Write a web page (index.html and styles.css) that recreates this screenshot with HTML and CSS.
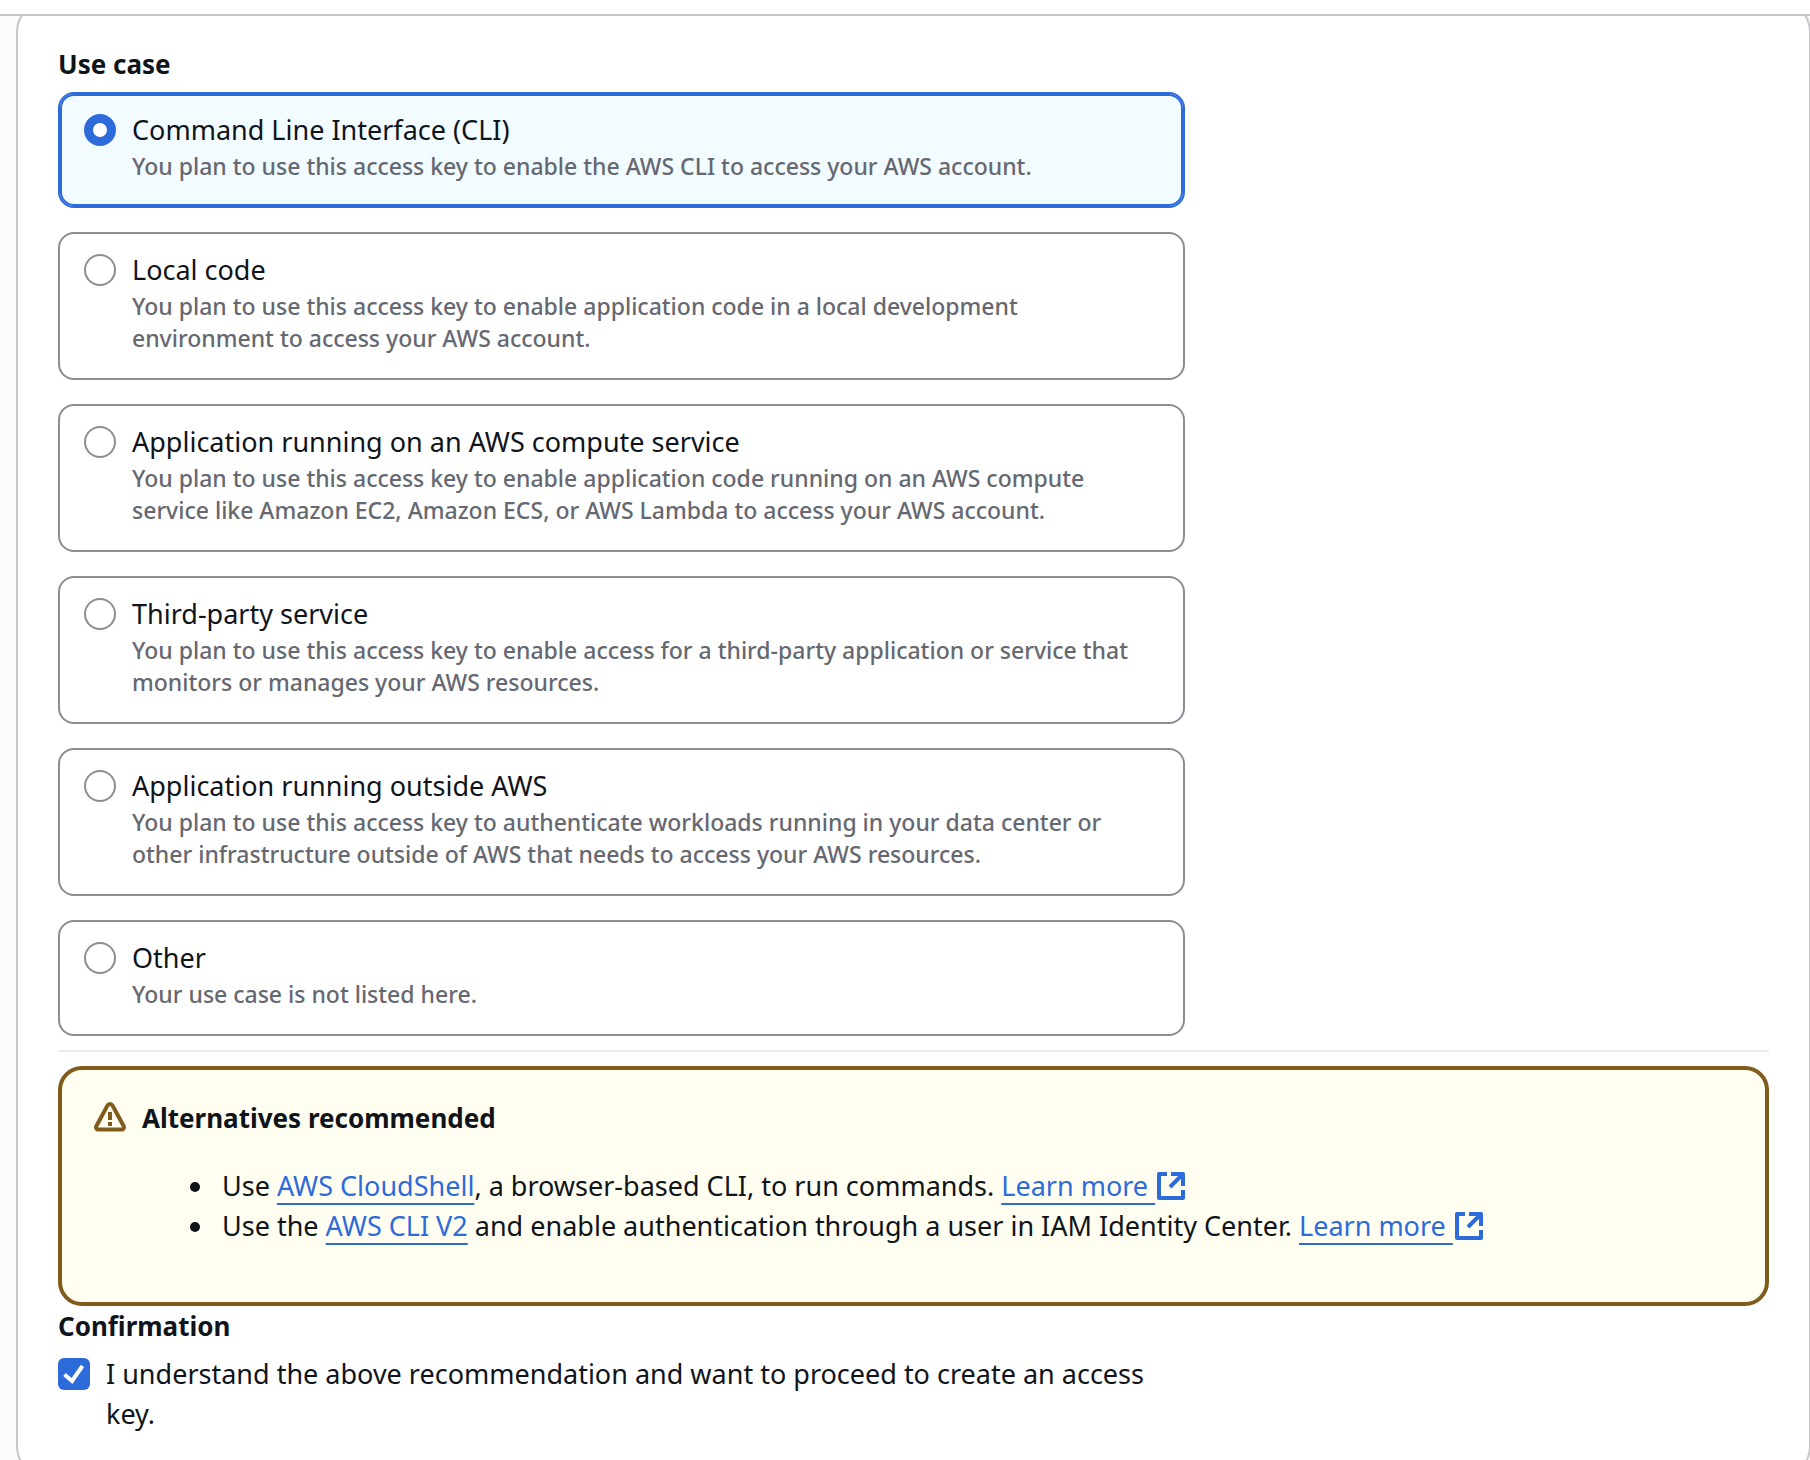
FILE: index.html
```html
<!DOCTYPE html>
<html lang="en">
<head>
<meta charset="utf-8">
<meta name="viewport" content="width=device-width, initial-scale=1">
<title>Create access key</title>
<link rel="stylesheet" href="styles.css">
</head>
<body>
<div class="topbar"></div>
<main class="scroller">
  <form class="container">
    <fieldset class="group">
      <legend class="heading">Use case</legend>
      <div class="columns">
        <div class="tiles">
          <label class="tile">
            <input class="radio" type="radio" name="usecase" checked>
            <span class="tile-text">
              <span class="tile-title">Command Line Interface (CLI)</span>
              <span class="tile-desc">You plan to use this access key to enable the AWS CLI to access your AWS account.</span>
            </span>
          </label>
          <label class="tile">
            <input class="radio" type="radio" name="usecase">
            <span class="tile-text">
              <span class="tile-title">Local code</span>
              <span class="tile-desc">You plan to use this access key to enable application code in a local development environment to access your AWS account.</span>
            </span>
          </label>
          <label class="tile">
            <input class="radio" type="radio" name="usecase">
            <span class="tile-text">
              <span class="tile-title">Application running on an AWS compute service</span>
              <span class="tile-desc">You plan to use this access key to enable application code running on an AWS compute service like Amazon EC2, Amazon ECS, or AWS Lambda to access your AWS account.</span>
            </span>
          </label>
          <label class="tile">
            <input class="radio" type="radio" name="usecase">
            <span class="tile-text">
              <span class="tile-title">Third-party service</span>
              <span class="tile-desc">You plan to use this access key to enable access for a third-party application or service that monitors or manages your AWS resources.</span>
            </span>
          </label>
          <label class="tile">
            <input class="radio" type="radio" name="usecase">
            <span class="tile-text">
              <span class="tile-title">Application running outside AWS</span>
              <span class="tile-desc">You plan to use this access key to authenticate workloads running in your data center or other infrastructure outside of AWS that needs to access your AWS resources.</span>
            </span>
          </label>
          <label class="tile">
            <input class="radio" type="radio" name="usecase">
            <span class="tile-text">
              <span class="tile-title">Other</span>
              <span class="tile-desc">Your use case is not listed here.</span>
            </span>
          </label>
        </div>
      </div>
    </fieldset>

    <hr class="divider">

    <section class="alert">
      <svg class="icon alert-icon" viewBox="0 0 32 32" aria-hidden="true">
        <path d="M13.4 3.6 2.4 24c-.9 1.7.2 3.6 2 3.6h23.2c1.8 0 2.9-1.9 2-3.6l-11-20.4c-1.1-2-4.1-2-5.2 0z"/>
        <path d="M16 10v8M16 20v4"/>
      </svg>
      <div class="alert-body">
        <h2 class="heading">Alternatives recommended</h2>
        <ul class="alert-list">
          <li>Use <a class="link" href="#">AWS CloudShell</a>, a browser-based CLI, to run commands. <a class="link-external" href="#"><span class="link">Learn more&nbsp;</span><svg class="icon" viewBox="0 0 32 32" aria-hidden="true"><path d="M12 4H4v24h24v-8M16 4h12v12M27 5 15 17"/></svg></a></li>
          <li>Use the <a class="link" href="#">AWS CLI V2</a> and enable authentication through a user in IAM Identity Center. <a class="link-external" href="#"><span class="link">Learn more&nbsp;</span><svg class="icon" viewBox="0 0 32 32" aria-hidden="true"><path d="M12 4H4v24h24v-8M16 4h12v12M27 5 15 17"/></svg></a></li>
        </ul>
      </div>
    </section>

    <fieldset class="group">
      <legend class="heading">Confirmation</legend>
      <div class="columns">
        <label class="confirm">
          <span class="check">
            <input class="checkbox" type="checkbox" checked>
            <svg class="check-mark" viewBox="0 0 32 32" aria-hidden="true"><path d="M6.500 16.500 14 23 24.500 8"/></svg>
          </span>
          <span>I understand the above recommendation and want to proceed to create an access key.</span>
        </label>
      </div>
    </fieldset>
  </form>
</main>
</body>
</html>
```
FILE: styles.css
```css
:root {
  --text: #0f141a;
  --muted: #656871;
  --blue: #2d6bdb;
  --border: #c6c6cd;
  --control: #8c8c94;
  --warning: #805c1c;
}

*, *::before, *::after { box-sizing: border-box; }

body {
  margin: 0;
  background: #fcfcfd;
  color: var(--text);
  font-family: "Noto Sans", "Open Sans", sans-serif;
  font-size: 27px;
  line-height: 40px;
}

.topbar {
  position: fixed;
  top: 0;
  left: 0;
  right: 0;
  z-index: 1;
  height: 16px;
  background: #fff;
  border-bottom: 2px solid var(--border);
}

.scroller {
  height: 100vh;
  overflow: hidden auto;
  scrollbar-width: none;
}

.container {
  margin: 0 -1px 0 16px;
  padding: 42px 40px;
  background: #fff;
  border: 2px solid var(--border);
  border-radius: 32px;
}

.group {
  min-width: 0;
  margin: 0;
  padding: 0;
  border: 0;
}

.heading {
  margin: 0;
  padding: 0;
  font-size: 26px;
  font-weight: 700;
  line-height: 40px;
}

.columns {
  display: grid;
  grid-template-columns: repeat(3, minmax(0, 1fr));
  column-gap: 40px;
  padding-top: 8px;
}

.tiles {
  grid-column: span 2;
  display: grid;
  gap: 24px;
}

.tile {
  display: flex;
  gap: 16px;
  padding: 16px 24px 24px;
  border: 2px solid var(--control);
  border-radius: 16px;
}

.tile:has(:checked) {
  background: #f2fbff;
  border-color: var(--blue);
  box-shadow: inset 0 0 0 2px var(--blue);
}

.tile-text {
  display: flex;
  flex-direction: column;
}

.tile-desc {
  color: var(--muted);
  font-size: 23px;
  font-weight: 500;
  line-height: 32px;
}

.radio {
  appearance: none;
  flex: none;
  width: 32px;
  height: 32px;
  margin: 4px 0 0;
  background: #fff;
  border: 2px solid var(--control);
  border-radius: 50%;
}

.radio:checked { border: 9px solid var(--blue); }

.divider {
  margin: 14px 0;
  border: 0;
  border-top: 2px solid #ebebf0;
}

.alert {
  display: flex;
  gap: 16px;
  padding: 28px 32px;
  background: #fffef0;
  border: 4px solid var(--warning);
  border-radius: 24px;
}

.icon {
  flex: none;
  width: 32px;
  height: 32px;
  fill: none;
  stroke: currentColor;
  stroke-width: 4;
  stroke-linejoin: round;
}

.alert-icon {
  margin-top: 4px;
  color: var(--warning);
}

.alert-list {
  margin: 28px 0;
  padding-left: 74px;
}

.alert-list li { padding-left: 6px; }

.link {
  color: var(--blue);
  text-decoration: underline 2px;
  text-decoration-skip-ink: none;
  text-underline-offset: 7px;
}

.link-external {
  display: inline-flex;
  align-items: center;
  color: var(--blue);
  text-decoration: none;
}

.confirm {
  grid-column: span 2;
  display: flex;
  gap: 16px;
}

.check {
  flex: none;
  display: grid;
  width: 32px;
  height: 32px;
  margin-top: 4px;
}

.checkbox,
.check-mark {
  grid-area: 1 / 1;
  width: 32px;
  height: 32px;
  margin: 0;
}

.checkbox {
  appearance: none;
  background: var(--blue);
  border-radius: 6px;
}

.check-mark {
  fill: none;
  stroke: #fff;
  stroke-width: 4;
  pointer-events: none;
}
```
